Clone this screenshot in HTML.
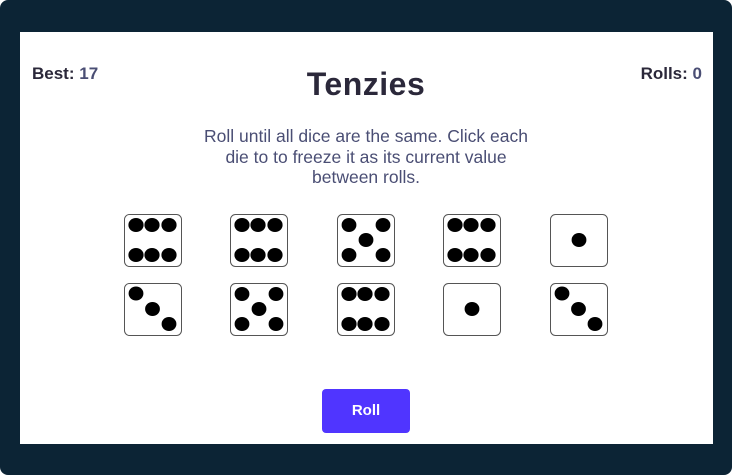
<!DOCTYPE html>
<html><head><style>
html,body{margin:0;padding:0;background:#fff;}
body{width:732px;height:475px;position:relative;overflow:hidden;font-family:"Liberation Sans",sans-serif;}
.frame{position:absolute;left:0;top:0;width:732px;height:475px;background:#0c2435;border-radius:8px;}
.panel{position:absolute;left:20px;top:32px;width:693px;height:412px;background:#fff;}
.best{position:absolute;left:32px;top:64px;font-size:17px;font-weight:bold;color:#2b283a;}
.rolls{position:absolute;right:30px;top:64px;font-size:17px;font-weight:bold;color:#2b283a;}
.v{color:#4a4e74;}
h1{position:absolute;left:0;width:732px;top:66px;margin:0;text-align:center;font-size:32px;font-weight:bold;color:#2b283a;letter-spacing:0.5px;}
.desc{position:absolute;left:0;width:732px;top:126px;text-align:center;font-size:17.5px;line-height:20.5px;color:#4a4e74;white-space:nowrap;}
svg.d{position:absolute;}
.btn{position:absolute;left:322px;top:389px;width:88px;height:44px;background:#5035ff;border-radius:4px;color:#fff;font-weight:bold;font-size:15px;text-align:center;line-height:44px;}
</style></head><body>
<div class="frame"></div>
<div class="panel"></div>
<div class="best">Best: <span class="v">17</span></div>
<div class="rolls">Rolls: <span class="v">0</span></div>
<h1>Tenzies</h1>
<div class="desc">Roll until all dice are the same. Click each<br>die to to freeze it as its current value<br>between rolls.</div>
<svg width="0" height="0" style="position:absolute"><defs>
<g id="b"><rect x="0.5" y="0.5" width="57" height="52" rx="5" fill="#fff" stroke="#555"/></g>
<g id="d6"><use href="#b"/><ellipse cx="12" cy="11" rx="7.6" ry="7"/><ellipse cx="28" cy="11" rx="7.6" ry="7"/><ellipse cx="45" cy="11" rx="7.6" ry="7"/><ellipse cx="12" cy="41" rx="7.6" ry="7"/><ellipse cx="28" cy="41" rx="7.6" ry="7"/><ellipse cx="45" cy="41" rx="7.6" ry="7"/></g>
<g id="d5"><use href="#b"/><ellipse cx="12" cy="11" rx="7.4" ry="7"/><ellipse cx="46" cy="11" rx="7.4" ry="7"/><ellipse cx="29" cy="26" rx="7.4" ry="7"/><ellipse cx="12" cy="41" rx="7.4" ry="7"/><ellipse cx="46" cy="41" rx="7.4" ry="7"/></g>
<g id="d3"><use href="#b"/><ellipse cx="12" cy="10.5" rx="7.4" ry="7"/><ellipse cx="28.5" cy="26" rx="7.4" ry="7"/><ellipse cx="45" cy="41" rx="7.4" ry="7"/></g>
<g id="d1"><use href="#b"/><ellipse cx="29" cy="26" rx="7.4" ry="7"/></g>
</defs></svg>
<svg class="d" style="left:124px;top:214px" width="58" height="53"><use href="#d6"/></svg>
<svg class="d" style="left:230px;top:214px" width="58" height="53"><use href="#d6"/></svg>
<svg class="d" style="left:337px;top:214px" width="58" height="53"><use href="#d5"/></svg>
<svg class="d" style="left:443px;top:214px" width="58" height="53"><use href="#d6"/></svg>
<svg class="d" style="left:550px;top:214px" width="58" height="53"><use href="#d1"/></svg>
<svg class="d" style="left:124px;top:283px" width="58" height="53"><use href="#d3"/></svg>
<svg class="d" style="left:230px;top:283px" width="58" height="53"><use href="#d5"/></svg>
<svg class="d" style="left:337px;top:283px" width="58" height="53"><use href="#d6"/></svg>
<svg class="d" style="left:443px;top:283px" width="58" height="53"><use href="#d1"/></svg>
<svg class="d" style="left:550px;top:283px" width="58" height="53"><use href="#d3"/></svg>
<div class="btn">Roll</div>
</body></html>
